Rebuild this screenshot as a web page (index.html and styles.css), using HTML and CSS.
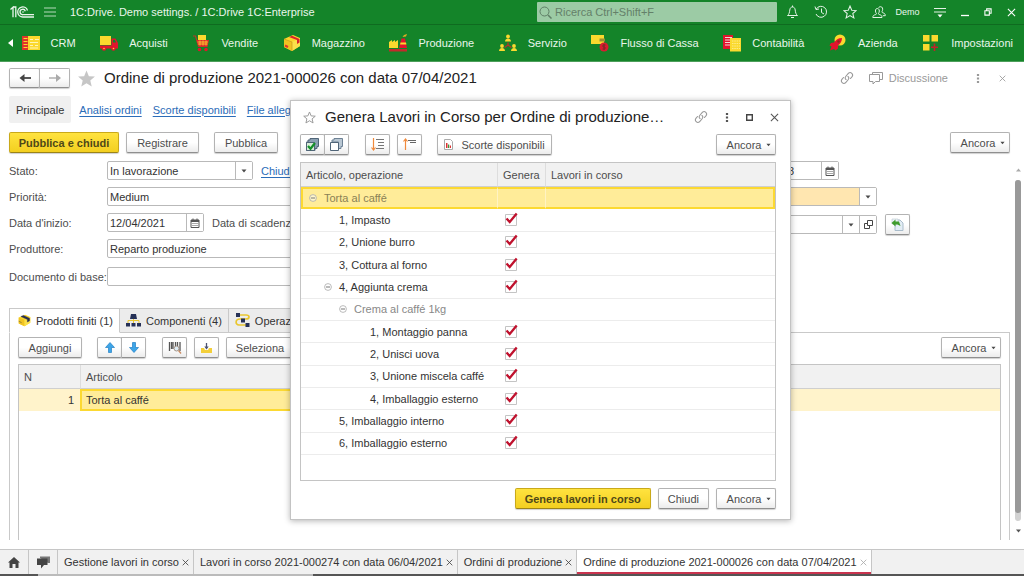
FILE: index.html
```html
<!DOCTYPE html>
<html lang="it">
<head>
<meta charset="utf-8">
<meta name="viewport" content="width=device-width, initial-scale=1">
<title>1C:Drive. Demo settings. / 1C:Drive 1C:Enterprise</title>
<link rel="stylesheet" href="styles.css">
</head>
<body>
<svg class="sprite" aria-hidden="true">
  <symbol id="i-caret" viewBox="0 0 6 4"><path d="M.5 .5h5L3 3.5z" fill="#4a4a4a"/></symbol>
  <symbol id="i-calendar" viewBox="0 0 10 10"><path d="M1 2h8v7.500H1z" fill="none" stroke="#555"/><path d="M1 2h8v2H1zM2.500 .5h1v2h-1zM6.500 .5h1v2h-1z" fill="#555"/><path d="M2.500 5.500h5M2.500 7.500h5" stroke="#555" stroke-dasharray="1 1"/></symbol>
  <symbol id="i-link" viewBox="0 0 14 14"><g fill="none" stroke="currentColor" stroke-width="1.100" stroke-linecap="round"><path d="M6 8.500a2.300 2.300 0 0 1-.3-3L8.500 2.200a2.500 2.500 0 0 1 3.600 3.400L10.500 7.500"/><path d="M8 5.500a2.300 2.300 0 0 1 .3 3L5.500 11.800a2.500 2.500 0 0 1-3.600-3.400L3.500 6.500"/></g></symbol>
  <symbol id="i-dots" viewBox="0 0 4 12"><path d="M.8 1h2.400v2.200H.8zM.8 4.900h2.400v2.200H.8zM.8 8.800h2.400V11H.8z" fill="currentColor"/></symbol>
  <symbol id="i-close" viewBox="0 0 10 10"><path d="M1 1l8 8M9 1L1 9" stroke="currentColor" stroke-width="1.200" fill="none"/></symbol>
  <symbol id="i-star" viewBox="0 0 16 16"><path d="M8 1.200l2 4.800 5.100.4-3.900 3.300 1.200 5L8 12l-4.400 2.700 1.200-5L.9 6.400 6 6z"/></symbol>
  <symbol id="i-minus" viewBox="0 0 8 8"><circle cx="4" cy="4" r="3.400" fill="#fff" fill-opacity=".5" stroke="#aaa" stroke-width=".8"/><path d="M2 4h4" stroke="#777"/></symbol>
  <symbol id="i-box" viewBox="0 0 18 18"><path d="M1 5l9-4 7 3v8l-8 5-8-4z" fill="#fbd62b"/><path d="M1 5l8 3v9l-8-4z" fill="#f0c322"/><path d="M9 8l8-4v8l-8 5z" fill="#fbe04a"/></symbol>
</svg>

<header class="titlebar">
  <svg class="logo" viewBox="0 0 24 12" fill="none" stroke="#e9f5eb"><path d="M.5 3.500L3 1.200v10M3 1H5.800v10.200" stroke-width="1.300"/><path d="M17.500 4.500A5 5 0 1 0 13 11H24" stroke-width="1.300"/><path d="M15.300 5.200A2.700 2.700 0 1 0 13 8.700H24" stroke-width="1.300"/><circle cx="13" cy="6" r=".8" fill="#e9f5eb" stroke="none"/></svg>
  <button class="bar-btn" aria-label="Menu"><svg width="12" height="10" viewBox="0 0 12 10"><path d="M0 1h12M0 5h12M0 9h12" stroke="#b5d9bb" stroke-width="1.200"/></svg></button>
  <span class="app-title">1C:Drive. Demo settings. / 1C:Drive 1C:Enterprise</span>
  <label class="search">
    <svg width="13" height="13" viewBox="0 0 13 13" fill="none" stroke="#5f7f66"><circle cx="5.500" cy="5.500" r="4.500"/><path d="M9 9l3.500 3.500" stroke-width="1.500"/></svg>
    <input type="search" placeholder="Ricerca Ctrl+Shift+F" aria-label="Ricerca">
  </label>
  <div class="sys">
    <button class="bar-btn" aria-label="Notifiche"><svg width="13" height="14" viewBox="0 0 13 14" fill="none" stroke="#e3f2e5"><path d="M1.500 10.500c1.500-1 2-3 2.300-5.500C4 3 5 2 6.500 2S9 3 9.200 5c.3 2.500.8 4.500 2.300 5.500zM5 12.500h3M6.500 .5V2"/></svg></button>
    <button class="bar-btn" aria-label="Cronologia"><svg width="14" height="14" viewBox="0 0 14 14" fill="none" stroke="#e3f2e5"><path d="M2.300 4A5.500 5.500 0 1 1 2 9M1 1.500L2 4.600l3-.6M7.500 3.500V7.500l2.500 1.500"/></svg></button>
    <button class="bar-btn" aria-label="Preferiti"><svg width="14" height="14" fill="none" stroke="#e3f2e5" stroke-width="1.200"><use href="#i-star"/></svg></button>
    <button class="bar-btn user"><svg width="14" height="13" viewBox="0 0 14 13" fill="none" stroke="#e3f2e5"><path d="M.8 11.500c0-2 1.200-2.500 3-3C5 8 4.300 7.500 3.800 6.500 3 4.500 3.500 2.500 5.300 2.500S7.800 4.500 7 6.500C6.500 7.500 6 8 7.200 8.500c1.800.5 2.800 1 2.800 3z"/><path d="M6.500 2C7 1 7.700.7 8.500.7c2 0 2.600 2 1.900 4-.4 1-.9 1.600.3 2 1.600.6 2.600 1 2.600 3h-2.500"/></svg><span>Demo</span></button>
    <button class="bar-btn" aria-label="Impostazioni finestra"><svg width="12" height="11" viewBox="0 0 12 11"><path d="M0 1.500h12M0 5h12" stroke="#e3f2e5"/><path d="M3.500 7.500h5L6 10.500z" fill="#fff"/></svg></button>
    <button class="bar-btn" aria-label="Riduci"><svg width="8" height="10" viewBox="0 0 8 10"><path d="M0 8.500h8" stroke="#fff" stroke-width="1.300"/></svg></button>
    <button class="bar-btn" aria-label="Ripristina"><svg width="8" height="8" viewBox="0 0 9 9" fill="none" stroke="#fff" stroke-width="1.200"><path d="M1 3h5v5H1zM3 3V1h5v5H6"/></svg></button>
    <button class="bar-btn" aria-label="Chiudi"><svg width="9" height="9" color="#fff"><use href="#i-close"/></svg></button>
  </div>
</header>

<nav class="sections">
  <button class="bar-btn back" aria-label="Indietro"><svg width="5" height="8" viewBox="0 0 5 8"><path d="M5 0v8L0 4z" fill="#fff"/></svg></button>
  <a href="#"><svg viewBox="0 0 18 18"><path d="M0 2h18v14H0z" fill="#fbd92e"/><path d="M0 2h6v14H0z" fill="#e0352b"/><path d="M1.500 4.500h4M1.500 7.500h4M1.500 10.500h4M1.500 13.500h4" stroke="#fbd92e"/><path d="M8 5.500h3M13 5.500h4M8 8.500h8M8 11.500h3M13 11.500h3M8 14h8" stroke="#fff4b5"/></svg>CRM</a>
  <a href="#"><svg viewBox="0 0 18 18"><path d="M0 2h11v9H0z" fill="#fbd92e"/><path d="M11.500 4.500h4L18 9v5.500H0v-3h11.500z" fill="#e2152d"/><path d="M13 6h2l1 2.500h-3z" fill="#148429"/><circle cx="4" cy="14.500" r="2.300" fill="#e2152d"/><circle cx="13.500" cy="14.500" r="2.300" fill="#e2152d"/><circle cx="4" cy="14.500" r=".8" fill="#fbd92e"/><circle cx="13.500" cy="14.500" r=".8" fill="#fbd92e"/></svg>Acquisti</a>
  <a href="#"><svg viewBox="0 0 18 18"><path d="M6 1h8v5H6z" fill="#fbd92e"/><path d="M1 2h2.500l3 10.500h9" stroke="#b8392b" fill="none" stroke-width="1.200"/><path d="M4.500 6H17l-1.500 6.500H6.500z" fill="#e2252d"/><path d="M5.500 8h10.500M6 10h9.500M8 6.500v5M11 6.500v5M14 6.500v5" stroke="#f7c02c"/><circle cx="7.500" cy="15.500" r="1.800" fill="#e2152d"/><circle cx="14" cy="15.500" r="1.800" fill="#e2152d"/></svg>Vendite</a>
  <a href="#"><svg viewBox="0 0 18 18"><use href="#i-box"/><path d="M6 3l8 3v4l2.500-1.500V5L9 1.800z" fill="#d9232d"/><path d="M2 11.500l3 1.500" stroke="#e0352b" stroke-width="2"/><path d="M1 5l8 3v9" stroke="#c99a1b" stroke-width=".7" fill="none"/></svg>Magazzino</a>
  <a href="#"><svg viewBox="0 0 18 18"><path d="M0 14V8l3-2v2l3-2v2l3-2v8z" fill="#fbd92e"/><path d="M12.500 4.500h3.500l2 9.500h-8z" fill="#e2152d"/><path d="M11.500 8.500h5.500l.4 2h-6.300z" fill="#fbd92e"/><path d="M13.500 3l1.500-2 3-1-1 2.500z" fill="#d8ae25"/><path d="M0 15h18v2.500H0z" fill="#c22a2b"/></svg>Produzione</a>
  <a href="#"><svg viewBox="0 0 18 18"><g fill="#fbd92e"><circle cx="9" cy="2.500" r="1.900"/><path d="M6 7.500c0-4 6-4 6 0z"/><circle cx="3" cy="12" r="1.900"/><path d="M0 17c0-4 6-4 6 0z"/><circle cx="15" cy="12" r="1.900"/><path d="M12 17c0-4 6-4 6 0z"/></g><path d="M9 8.500v3M9 11l-3.500 2.500M9 11l3.500 2.500" stroke="#b8322b" stroke-width="1.300"/></svg>Servizio</a>
  <a href="#"><svg viewBox="0 0 18 18"><path d="M0 1h13v9H0z" fill="#fbd92e"/><path d="M8.500 4.500H14v3H8.500z" fill="#9a9330"/><circle cx="13" cy="13" r="4.500" fill="#d81c30"/><path d="M14.500 11h-2.500v2h2v2h-2.500M13 10v6" stroke="#7d2a24" fill="none"/></svg>Flusso di Cassa</a>
  <a href="#"><svg viewBox="0 0 18 18"><path d="M0 1h10v14H0z" fill="#e2152d"/><path d="M2 3.500h7M2 6h6M2 8.500h5M2 11h5" stroke="#f6d6d6"/><path d="M7 4h11v13.500H7z" fill="#fbd92e"/><path d="M9 7h8M9 9.500h8M9 12h8M9 14.500h8" stroke="#fff3ae" stroke-width=".7" stroke-dasharray="1.500 .8"/></svg>Contabilità</a>
  <a href="#"><svg viewBox="0 0 18 18"><circle cx="11" cy="6" r="5.500" fill="#fbd92e"/><path d="M13 4c-4 0-6 2-8 4.500l-3 .5L.5 11.500l2 1-1.500 4 4-1.500 1.500 1.500L9 14.500v-3c2.500-2 4-4 4-7.500z" fill="#e2152d"/><circle cx="9.500" cy="7.500" r="1.200" fill="#8c2a22"/></svg>Azienda</a>
  <a href="#"><svg viewBox="0 0 18 18"><path d="M1 1h6.500v6.500H1zM9.500 1H16v6.500H9.500zM1 10h6.500v6.500H1z" fill="#fbd92e"/><path d="M12.500 9.500v7.500M9 13.300h7" stroke="#c2232b" stroke-width="1.600"/></svg>Impostazioni</a>
</nav>

<main class="page">
  <div class="page-head">
    <div class="btn-group">
      <button class="btn nav-btn" aria-label="Indietro"><svg width="12" height="8" viewBox="0 0 12 8"><path d="M12 4H3" stroke="#444" stroke-width="1.800"/><path d="M5.500 0v8L.5 4z" fill="#444"/></svg></button>
      <button class="btn nav-btn" aria-label="Avanti"><svg width="12" height="8" viewBox="0 0 12 8"><path d="M0 4h9" stroke="#aaa" stroke-width="1.400"/><path d="M7 0v8l5-4z" fill="#aaa"/></svg></button>
    </div>
    <svg class="page-star" viewBox="0 0 16 16" fill="#c6c6c6"><use href="#i-star" width="16" height="16"/></svg>
    <h1>Ordine di produzione 2021-000026 con data 07/04/2021</h1>
    <div class="page-tools">
      <button class="plain" aria-label="Collegamento"><svg width="14" height="14"><use href="#i-link"/></svg></button>
      <button class="plain talk"><svg width="14" height="13" viewBox="0 0 14 13" fill="none" stroke="currentColor"><path d="M3.500 2.500v-2h10v7H11"/><path d="M.5 2.500h10v7H6.500L4 12V9.500H.5z"/></svg>Discussione</button>
      <button class="plain" aria-label="Altro"><svg width="4" height="11"><use href="#i-dots"/></svg></button>
      <button class="plain" aria-label="Chiudi"><svg width="7" height="7"><use href="#i-close"/></svg></button>
    </div>
  </div>

  <div class="links">
    <a class="current" href="#">Principale</a>
    <a href="#">Analisi ordini</a>
    <a href="#">Scorte disponibili</a>
    <a href="#">File allegati</a>
  </div>

  <div class="commands">
    <button class="btn primary publish">Pubblica e chiudi</button>
    <button class="btn register">Registrare</button>
    <button class="btn post">Pubblica</button>
    <button class="btn more">Ancora<svg><use href="#i-caret"/></svg></button>
  </div>

  <div class="scroller">
    <div class="doc">
      <div class="form">
        <div class="col">
          <div class="row"><label for="stato">Stato:</label>
            <div class="field state"><select id="stato"><option>In lavorazione</option></select><span class="adorn"><svg width="6" height="4"><use href="#i-caret"/></svg></span></div>
            <a href="#">Chiudi</a></div>
          <div class="row"><label for="prio">Priorità:</label><div class="field wide"><input id="prio" type="text" value="Medium"></div></div>
          <div class="row"><label for="inizio">Data d'inizio:</label>
            <div class="field date"><input id="inizio" type="text" value="12/04/2021"><button class="adorn" aria-label="Calendario"><svg width="10" height="10"><use href="#i-calendar"/></svg></button></div>
            <span>Data di scadenza:</span></div>
          <div class="row"><label for="prod">Produttore:</label><div class="field wide"><input id="prod" type="text" value="Reparto produzione"></div></div>
          <div class="row spaced"><label for="base">Documento di base:</label><div class="field wide"><input id="base" type="text"></div></div>
        </div>
        <div class="col right">
          <div class="row"><div class="field number"><input type="text" value="8" aria-label="Data documento"><button class="adorn" aria-label="Calendario"><svg width="10" height="10"><use href="#i-calendar"/></svg></button></div></div>
          <div class="row"><div class="field amber"><select aria-label="Azienda"><option></option></select><span class="adorn"><svg width="6" height="4"><use href="#i-caret"/></svg></span></div></div>
          <div class="row spaced"><div class="field order"><input type="text" aria-label="Ordine"><button class="adorn" aria-label="Elenco"><svg width="6" height="4"><use href="#i-caret"/></svg></button><button class="adorn" aria-label="Apri"><svg width="9" height="9" viewBox="0 0 9 9" fill="none" stroke="#444"><path d="M3.500 .5h5v5h-5zM3.500 3.500h-3v5h5v-3"/></svg></button></div>
            <button class="btn icon" aria-label="Compila"><svg width="13" height="13" viewBox="0 0 13 13"><path d="M4 2h5l3 3v7.500H4z" fill="#e3edf5" stroke="#a9bccb"/><path d="M1 1h6v5H1z" fill="#eef4f8" stroke="#b9c7d2" stroke-width=".6"/><path d="M.5 5L4.500 1.500v2H8l1.500 4.500L6.500 6.500h-2v2z" fill="#3f9c2c"/></svg></button></div>
        </div>
      </div>

      <div class="tabs" role="tablist">
        <button class="tab active" role="tab" aria-selected="true"><svg width="13" height="13" viewBox="0 0 18 18"><use href="#i-box"/><path d="M4 3.500L13 7.500V11l3-1.500V6L7.500 2zM1 10l4 2" fill="#2a2f4f" stroke="#2a2f4f" stroke-width=".6"/></svg>Prodotti finiti (1)</button>
        <button class="tab" role="tab"><svg width="15" height="13" viewBox="0 0 15 13"><path d="M2 9V6.500h11V9M7.500 3v6" stroke="#e9c62e" fill="none"/><path d="M5 0h5l1 5H4zM0 9h4v3.500H0zM5.500 9h4v3.500h-4zM11 9h4v3.500h-4z" fill="#263157"/></svg>Componenti (4)</button>
        <button class="tab" role="tab"><svg width="15" height="15" viewBox="0 0 15 15"><path d="M4 2h7c4 0 4 4 0 4H5C0 6 0 12 4 12h7" stroke="#e9c62e" stroke-width="1.700" fill="none"/><path d="M1 0h4v4H1zM6 5.500h4v4H6zM10.500 10h4v4h-4z" fill="#263157"/></svg>Operazioni</button>
      </div>
      <div class="panel">
        <div class="toolbar">
          <button class="btn add">Aggiungi</button>
          <div class="btn-group"><button class="btn icon" aria-label="Su"><svg width="10" height="11" viewBox="0 0 10 11"><path d="M5 .5L9.500 5.500H6.500v5h-3v-5H.5z" fill="#3da5e8" stroke="#2380c4" stroke-width=".7"/></svg></button><button class="btn icon" aria-label="Giù"><svg width="10" height="11" viewBox="0 0 10 11"><path d="M5 10.500L.5 5.500h3v-5h3v5h3z" fill="#3da5e8" stroke="#2380c4" stroke-width=".7"/></svg></button></div>
          <button class="btn icon scan" aria-label="Codice a barre"><svg width="14" height="13" viewBox="0 0 14 13"><path d="M1.500 1v9M3.500 1v7M5 1v7M7.500 1v5M9.500 1v5M12 1v9" stroke="#555" stroke-width="1.300"/><circle cx="8.500" cy="7.500" r="2.500" fill="#dcebf5" stroke="#a59486"/><path d="M10.500 9.500l2.500 3" stroke="#c98b62" stroke-width="1.300"/></svg></button>
          <button class="btn icon" aria-label="Carica"><svg width="11" height="10" viewBox="0 0 11 10"><path d="M0 5h3l1 2h3l1-2h3v5H0z" fill="#f3cf3a"/><path d="M5.500 0v5" stroke="#4a5270" stroke-width="1.300"/><path d="M3.300 3.500h4.400L5.500 6.500z" fill="#4a5270"/></svg></button>
          <button class="btn pick">Seleziona</button>
          <button class="btn more">Ancora<svg><use href="#i-caret"/></svg></button>
        </div>
        <div class="items-frame">
          <table class="items">
            <thead><tr><th class="n">N</th><th class="art">Articolo</th><th></th></tr></thead>
            <tbody><tr><td class="n num">1</td><td class="cell-on">Torta al caffé</td><td></td></tr></tbody>
          </table>
        </div>
      </div>
    </div>
    <div class="scrollbar" aria-hidden="true">
      <svg width="5" height="4" viewBox="0 0 5 4"><path d="M0 3.500h5L2.500 .5z" fill="#aaa"/></svg>
      <div class="track"><div class="thumb"></div></div>
      <svg width="5" height="4" viewBox="0 0 5 4"><path d="M0 .5h5L2.500 3.500z" fill="#555"/></svg>
    </div>
  </div>

  <section class="window" role="dialog" aria-labelledby="win-title">
    <div class="win-head">
      <svg width="13" height="13" viewBox="0 0 16 16" fill="none" stroke="#999" stroke-width="1.200"><use href="#i-star" width="16" height="16"/></svg>
      <h2 id="win-title">Genera Lavori in Corso per Ordine di produzione…</h2>
      <button class="plain" aria-label="Collegamento"><svg width="14" height="14"><use href="#i-link"/></svg></button>
      <button class="plain dark" aria-label="Altro"><svg width="4" height="11"><use href="#i-dots"/></svg></button>
      <button class="plain dark" aria-label="Ingrandisci"><svg width="7" height="7" viewBox="0 0 7 7"><path d="M.7 .7h5.600v5.600H.7z" fill="none" stroke="#444" stroke-width="1.400"/></svg></button>
      <button class="plain dark" aria-label="Chiudi"><svg width="9" height="9"><use href="#i-close"/></svg></button>
    </div>
    <div class="win-tools">
      <div class="btn-group"><button class="btn icon" aria-label="Seleziona tutto"><svg width="13" height="13" viewBox="0 0 13 13"><path d="M4 .5h8.500v8H11v2H9v2H.5V4H2V2h2z" fill="#8ba0b2" stroke="#506578"/><path d="M.5 4.500h8v8h-8z" fill="#d9eed8" stroke="#506578"/><path d="M2 8l2.500 2.700L9 5" stroke="#14902a" stroke-width="2.200" fill="none"/></svg></button><button class="btn icon" aria-label="Deseleziona tutto"><svg width="13" height="13" viewBox="0 0 13 13"><path d="M4 .5h8.500v8H11v2H8.500V4H2V2h2z" fill="#b9c7d3" stroke="#6d8194"/><path d="M.5 4.500h8v8h-8z" fill="#fff" stroke="#506578"/></svg></button></div>
      <button class="btn icon" aria-label="Espandi"><svg width="13" height="13" viewBox="0 0 13 13"><path d="M2.500 0v11M.5 9.500l2 2.500 2-2.500" stroke="#f08a3c" stroke-width="1.200" fill="none"/><path d="M5 1.500h8M7 4.500h6M7 7.500h6M5 10.500h8" stroke="#777"/></svg></button>
      <button class="btn icon" aria-label="Comprimi"><svg width="13" height="13" viewBox="0 0 13 13"><path d="M2.500 12V1M.5 3.500l2-2.500 2 2.500" stroke="#f08a3c" stroke-width="1.200" fill="none"/><path d="M5 2.500h8M7 4.500h6" stroke="#666" stroke-width="1.200"/></svg></button>
      <button class="btn stock"><svg width="9" height="11" viewBox="0 0 9 11"><path d="M.5 .5h6l2 2v8h-8z" fill="#fff" stroke="#aaa"/><path d="M2 4h1.500v5H2z" fill="#d33"/><path d="M4 5.500h1.200V9H4z" fill="#3a9a3a"/><path d="M5.800 6.500H7V9H5.800z" fill="#d33"/></svg>Scorte disponibili</button>
      <button class="btn more">Ancora<svg><use href="#i-caret"/></svg></button>
    </div>
    <div class="ops-frame">
      <table class="ops">
        <thead><tr><th class="name">Articolo, operazione</th><th class="gen">Genera</th><th>Lavori in corso</th></tr></thead>
        <tbody>
          <tr class="on"><td class="l0"><svg><use href="#i-minus"/></svg>Torta al caffé</td><td></td><td></td></tr>
          <tr><td class="l2">1, Impasto</td><td><input type="checkbox" checked aria-label="Impasto"></td><td></td></tr>
          <tr><td class="l2">2, Unione burro</td><td><input type="checkbox" checked aria-label="Unione burro"></td><td></td></tr>
          <tr><td class="l2">3, Cottura al forno</td><td><input type="checkbox" checked aria-label="Cottura al forno"></td><td></td></tr>
          <tr><td class="l1"><svg><use href="#i-minus"/></svg>4, Aggiunta crema</td><td><input type="checkbox" checked aria-label="Aggiunta crema"></td><td></td></tr>
          <tr><td class="l2 group"><svg><use href="#i-minus"/></svg>Crema al caffé 1kg</td><td></td><td></td></tr>
          <tr><td class="l3">1, Montaggio panna</td><td><input type="checkbox" checked aria-label="Montaggio panna"></td><td></td></tr>
          <tr><td class="l3">2, Unisci uova</td><td><input type="checkbox" checked aria-label="Unisci uova"></td><td></td></tr>
          <tr><td class="l3">3, Unione miscela caffé</td><td><input type="checkbox" checked aria-label="Unione miscela caffé"></td><td></td></tr>
          <tr><td class="l3">4, Imballaggio esterno</td><td><input type="checkbox" checked aria-label="Imballaggio esterno crema"></td><td></td></tr>
          <tr><td class="l2">5, Imballaggio interno</td><td><input type="checkbox" checked aria-label="Imballaggio interno"></td><td></td></tr>
          <tr><td class="l2">6, Imballaggio esterno</td><td><input type="checkbox" checked aria-label="Imballaggio esterno"></td><td></td></tr>
        </tbody>
      </table>
    </div>
    <div class="win-foot">
      <button class="btn primary">Genera lavori in corso</button>
      <button class="btn">Chiudi</button>
      <button class="btn more">Ancora<svg><use href="#i-caret"/></svg></button>
    </div>
  </section>
</main>

<footer class="taskbar">
  <a class="task-icon" href="#" aria-label="Home"><svg width="12" height="11" viewBox="0 0 12 11"><path d="M6 0l6 5.500h-1.500V11H7.500V7h-3v4h-3V5.500H0z" fill="#444"/></svg></a>
  <a class="task-icon" href="#" aria-label="Discussioni"><svg width="13" height="13" viewBox="0 0 13 13"><path d="M3 2V.5h10V7h-2" fill="#777"/><path d="M0 2.500h10.500V9H7l-3 3.500V9H0z" fill="#444"/></svg></a>
  <div class="task"><a href="#">Gestione lavori in corso</a><button class="plain" aria-label="Chiudi"><svg><use href="#i-close"/></svg></button></div>
  <div class="task"><a href="#">Lavori in corso 2021-000274 con data 06/04/2021</a><button class="plain" aria-label="Chiudi"><svg><use href="#i-close"/></svg></button></div>
  <div class="task"><a href="#">Ordini di produzione</a><button class="plain" aria-label="Chiudi"><svg><use href="#i-close"/></svg></button></div>
  <div class="task active"><a href="#">Ordine di produzione 2021-000026 con data 07/04/2021</a><button class="plain" aria-label="Chiudi"><svg><use href="#i-close"/></svg></button></div>
</footer>
</body>
</html>
```
FILE: styles.css
```css
* { box-sizing: border-box; }

html, body { height: 100%; }

body {
  margin: 0;
  display: flex;
  flex-direction: column;
  overflow: hidden;
  background: #fff;
  color: #333;
  font: 11px/14px "Liberation Sans", Arial, sans-serif;
}

button, input, select { font: inherit; color: inherit; }
button { cursor: pointer; white-space: nowrap; }
svg { flex: none; display: block; }
h1, h2 { margin: 0; font-weight: 400; color: #222; white-space: nowrap; }
.sprite { display: none; }

/* Title bar */
.titlebar {
  flex: none;
  display: flex;
  align-items: center;
  height: 25px;
  padding: 0 8px 0 10px;
  background: #148429;
  border-bottom: 1px solid #0f6b20;
  color: #eaf6ec;
}
.logo { width: 24px; height: 12px; margin-right: 10px; }
.bar-btn {
  display: flex;
  align-items: center;
  padding: 0;
  border: 0;
  background: none;
}
.app-title { flex: 1; margin-left: 14px; white-space: nowrap; }
.search {
  display: flex;
  align-items: center;
  gap: 3px;
  width: 240px;
  height: 20px;
  padding-left: 2px;
  background: #9ccba5;
  border-radius: 1px;
}
.search input {
  flex: 1;
  min-width: 0;
  padding: 0;
  border: 0;
  background: none;
  outline: 0;
}
.search input::placeholder { color: #648069; opacity: 1; }
.sys {
  display: flex;
  align-items: center;
  justify-content: space-between;
  width: 230px;
  margin-left: 9px;
}
.user { gap: 10px; font-size: 9px; }

/* Section bar */
.sections {
  flex: none;
  display: flex;
  align-items: center;
  justify-content: space-between;
  height: 37px;
  padding: 0 11px 0 8px;
  background: #148429;
  border-bottom: 1px solid #4d9f5b;
}
.sections a {
  display: flex;
  align-items: center;
  gap: 11px;
  color: #eaf6ec;
  text-decoration: none;
  white-space: nowrap;
}
.sections a svg { width: 18px; height: 18px; }
.back { margin-right: -16px; }

/* Buttons */
.btn {
  display: flex;
  align-items: center;
  justify-content: center;
  height: 21px;
  padding: 0 9px;
  border: 1px solid #b3b3b3;
  border-bottom-color: #8f8f8f;
  border-radius: 2px;
  background: linear-gradient(#fff 50%, #ececec);
  box-shadow: 0 1px 1px #d0d0d0;
  color: #4d4d4d;
}
.btn.icon { width: 25px; padding: 0; }
.btn.primary {
  border-color: #c9a91a;
  border-bottom-color: #9c8417;
  background: linear-gradient(#ffe33f, #f3cf20);
  color: #4f4818;
  font-weight: 700;
}
.btn-group { display: flex; }
.btn-group .btn + .btn { margin-left: -1px; border-radius: 0 2px 2px 0; }
.btn.more { width: 60px; gap: 5px; margin-left: auto; padding: 0 0 0 6px; }
.btn.more svg { width: 5px; height: 4px; }
.plain {
  display: flex;
  align-items: center;
  padding: 0;
  border: 0;
  background: none;
  color: #999;
}
.plain.dark { color: #555; }

/* Page */
.page {
  position: relative;
  flex: 1;
  min-height: 0;
  display: flex;
  flex-direction: column;
  padding: 6px 0 9px;
}
.page-head {
  display: flex;
  align-items: center;
  height: 20px;
  padding: 0 18px 0 9px;
}
.nav-btn { width: 31px; height: 20px; padding: 0; }
.page-star { width: 19px; height: 19px; margin: 0 8px 0 7px; }
h1 { font-size: 15px; line-height: 20px; }
.page-tools {
  display: flex;
  align-items: center;
  margin-left: auto;
}
.talk { gap: 6px; margin: 0 28px 0 15px; }
.page-tools .plain:last-child { margin-left: 19px; }

.links {
  display: flex;
  align-items: center;
  gap: 11px;
  height: 27px;
  margin: 8px 9px 9px;
}
.links a, .row a { color: #2b6cb8; text-underline-offset: 2px; white-space: nowrap; }
.links .current {
  padding: 7px 7px 6px;
  margin-right: -3px;
  background: #f0f0f0;
  border-radius: 2px;
  color: #333;
  text-decoration: none;
}
.commands { display: flex; padding: 0 14px 0 9px; }
.publish { width: 110px; }
.register { width: 73px; margin-left: 7px; }
.post { width: 64px; margin-left: 15px; }

.scroller {
  flex: 1;
  min-height: 0;
  display: flex;
  margin-top: 8px;
}
.doc {
  flex: 1;
  min-width: 0;
  display: flex;
  flex-direction: column;
  padding-left: 9px;
}
.form { display: flex; gap: 22px; }
.col { display: flex; flex-direction: column; gap: 7px; }
.row {
  display: flex;
  align-items: center;
  gap: 8px;
  height: 19px;
  color: #4d4d4d;
  white-space: nowrap;
}
.row.spaced { margin-top: 2px; }
.row label { width: 98px; margin-right: -8px; }
.field {
  display: flex;
  height: 19px;
  border: 1px solid #b9b9b9;
  border-radius: 2px;
  background: #fff;
  color: #333;
}
.field input, .field select {
  flex: 1;
  min-width: 0;
  width: 100%;
  padding: 0 2px;
  border: 0;
  background: none;
  outline: 0;
  appearance: none;
}
.adorn {
  flex: none;
  display: flex;
  align-items: center;
  justify-content: center;
  width: 17px;
  padding: 0;
  border: 0;
  border-left: 1px solid #b9b9b9;
  background: #fff;
}
.state { width: 146px; }
.date { width: 97px; }
.wide { width: 373px; }
.number { width: 337px; }
.number input { padding: 0 27px 0 0; text-align: right; }
.amber { width: 375px; background: #ffe6b0; }
.order { width: 375px; }

/* Tabs and item table */
.tabs {
  position: relative;
  z-index: 1;
  align-self: flex-start;
  display: flex;
  margin-top: 22px;
}
.tab {
  display: flex;
  align-items: center;
  gap: 5px;
  height: 25px;
  padding: 0 6px;
  border: 1px solid #c9c9c9;
  border-left: 0;
  background: #ececec;
  color: #333;
}
.tab.active {
  padding-left: 8px;
  border-left: 1px solid #c9c9c9;
  border-bottom-color: #fff;
  background: #fff;
}
.panel {
  flex: 1;
  min-height: 0;
  display: flex;
  flex-direction: column;
  margin-top: -1px;
  padding: 4px 8px 0;
  border: 1px solid #c9c9c9;
  border-bottom: 0;
}
.toolbar { display: flex; gap: 7px; margin-bottom: 6px; }
.add { width: 64px; margin-right: 8px; }
.scan { margin-left: 9px; }
.pick { width: 68px; }
.items-frame {
  flex: 1;
  min-height: 0;
  border: 1px solid #c4c4c4;
  border-bottom: 0;
}
table { width: 100%; border-collapse: separate; border-spacing: 0; table-layout: fixed; }
th {
  height: 24px;
  padding: 0 6px 0 5px;
  background: #f1f1f1;
  border-bottom: 1px solid #cfcfcf;
  color: #4d4d4d;
  font-weight: 400;
  text-align: left;
}
th + th { border-left: 1px solid #ddd; }
td { padding: 0 6px; white-space: nowrap; }
.items td { height: 22px; background: #fff3cb; }
.items .n { width: 61px; }
.items .num { text-align: right; }
.items .art { width: 440px; }
.items .cell-on { padding: 0 4px; border: 2px solid #fcd932; background: #ffec99; }

.scrollbar {
  flex: none;
  display: flex;
  flex-direction: column;
  align-items: center;
  gap: 8px;
  width: 6px;
  margin: 7px 3px 7px 5px;
}
.track {
  flex: 1;
  width: 6px;
  padding-bottom: 8px;
  border-radius: 3px;
  background: #d2d2d2;
}
.thumb { height: 100%; border-radius: 3px; background: #999; }

/* Floating window over the document */
.window {
  position: absolute;
  top: 38px;
  left: 290px;
  z-index: 2;
  width: 501px;
  padding: 6px 14px 10px 9px;
  border: 1px solid #c3c3c3;
  background: #fff;
  box-shadow: 0 1px 6px rgba(0, 0, 0, .3);
}
.win-head {
  display: flex;
  align-items: center;
  height: 20px;
  margin: 0 -3px 0 3px;
}
h2 { flex: 1; margin-left: 9px; font-size: 15px; line-height: 20px; }
.win-head .plain { margin-left: 17px; }
.win-tools { display: flex; gap: 7px; margin: 7px 0; }
.win-tools .btn-group { margin-right: 9px; }
.stock { gap: 8px; width: 115px; margin-left: 8px; padding: 0; }
.ops-frame { height: 319px; border: 1px solid #c4c4c4; }
.ops { height: 292px; }
.ops .name { width: 196px; }
.ops .gen { width: 48px; }
.ops td { height: 22px; border-bottom: 1px solid #ececec; }
.ops td svg { display: inline-block; width: 8px; height: 8px; margin-right: 7px; }
.ops .l0 { padding-left: 6px; color: #8a8156; }
.ops .l1 { padding-left: 23px; }
.ops .l2 { padding-left: 38px; }
.ops .l3 { padding-left: 69px; }
.ops .group { color: #888; }
.ops .on td {
  border-top: 2px solid #fcd932;
  border-bottom: 2px solid #fcd932;
  background: #ffec99;
}
.ops .on td + td { border-left: 1px solid #fff3c4; }
.ops .on td:first-child { border-left: 2px solid #fcd932; }
.ops .on td:last-child { border-right: 2px solid #fcd932; }
input[type="checkbox"] {
  display: block;
  width: 14px;
  height: 14px;
  margin: 0 0 2px 1px;
  appearance: none;
  background: url("data:image/svg+xml,%3Csvg xmlns='http://www.w3.org/2000/svg' viewBox='0 0 14 14'%3E%3Cpath d='M1.500 2.500h11v11h-11z' fill='%23fff' stroke='%23c4c4c4'/%3E%3C/svg%3E");
}
input[type="checkbox"]:checked {
  background: url("data:image/svg+xml,%3Csvg xmlns='http://www.w3.org/2000/svg' viewBox='0 0 14 14'%3E%3Cpath d='M1.500 2.500h11v11h-11z' fill='%23fff' stroke='%23c4c4c4'/%3E%3Cpath d='M2.500 6.500l3.200 3.500L12.700 1.500' fill='none' stroke='%23c0122e' stroke-width='2.300'/%3E%3C/svg%3E");
}
.win-foot { display: flex; justify-content: flex-end; gap: 7px; margin-top: 7px; }
.win-foot .btn.more { margin-left: 0; }

/* Open window tabs */
.taskbar {
  flex: none;
  display: flex;
  height: 27px;
  padding-bottom: 2px;
  border-top: 1px solid #c6c6c6;
  background: linear-gradient(90deg, #555 38px, #bbb 38px 313px, #555 313px) bottom / 100% 2px no-repeat, #f1f1f1;
}
.task-icon {
  display: flex;
  align-items: center;
  justify-content: center;
  width: 29px;
  border-right: 1px solid #c6c6c6;
}
.task {
  display: flex;
  align-items: center;
  gap: 3px;
  padding: 0 4px 0 6px;
  border-right: 1px solid #c6c6c6;
}
.task a { color: #333; text-decoration: none; white-space: nowrap; }
.task svg { width: 7px; height: 7px; color: #444; }
.task.active { background: #fff; box-shadow: inset 0 -2px #c9344f; }
.task.active svg { color: #aaa; }
```
